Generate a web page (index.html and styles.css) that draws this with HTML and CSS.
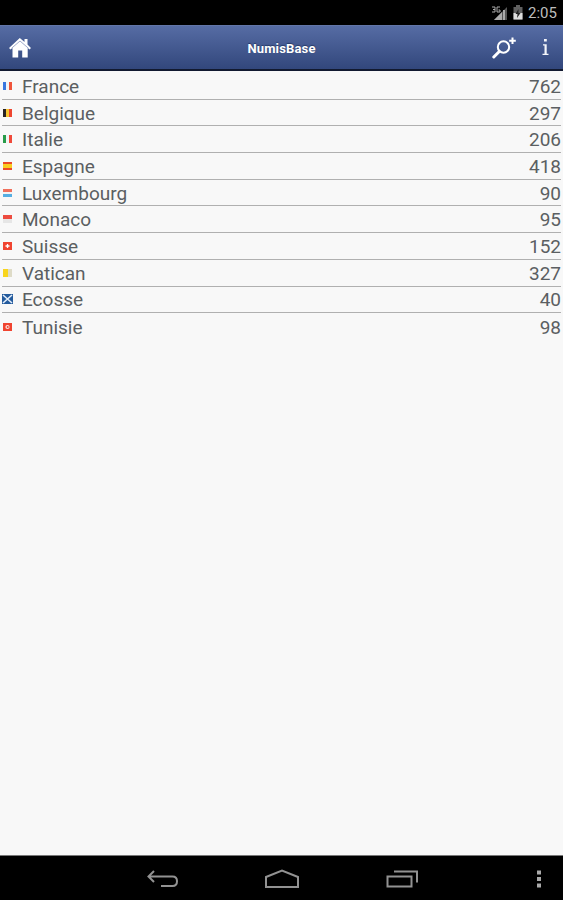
FILE: index.html
```html
<!DOCTYPE html>
<html lang="fr">
  <head>
    <meta charset="UTF-8" />
    <meta name="viewport" content="width=device-width, initial-scale=1.0" />
    <title>NumisBase</title>
    <link rel="stylesheet" href="styles.css">
  </head>
  <body>
    <div class="status-bar">
      <svg class="signal" width="17" height="16" viewBox="0 0 17 16">
        <path d="M16 2V15H3Z" fill="#555" />
        <path d="M11 7V15H3ZM12 5h2v10h-2z" fill="#aaa" />
        <path d="M1 2h3v5H1M2 4.500h2M9 2H6v5h3V5H7.500" fill="none" stroke="#aaa" />
      </svg>
      <svg class="battery" width="10" height="15" viewBox="0 0 10 15">
        <path d="M3 0h4v2h2.500v12.500h-9V2H3z" fill="#606060" />
        <path d="M.5 8h9v6.500h-9z" fill="#ddd" />
        <path d="M5.500 4L2.500 9h2L4 13l3.500-5h-2z" fill="#222" />
      </svg>
      <span class="clock">2:05</span>
    </div>

    <header class="header">
      <svg class="home" width="22" height="20" viewBox="0 0 22 20">
        <path d="M10.800 0L0 10l1.500 1.500L3.500 10v9.500h5.700v-7h4v7h5.500V10l1.800 1.500L22 10l-3.500-3.400V1h-3v3z" fill="#fff" />
        <path d="M2.500 10.300L11 3l8.500 7.300" fill="none" stroke="#8796bd" stroke-width=".8" />
      </svg>
      <h1>NumisBase</h1>
      <div class="actions">
        <svg class="search" width="25" height="22" viewBox="0 0 25 22">
          <circle cx="11.500" cy="10" r="5.700" fill="none" stroke="#fff" stroke-width="2" />
          <path d="M7.300 14.500L1.800 20" stroke="#fff" stroke-width="3" stroke-linecap="round" />
          <path d="M20.500 .5v6.500M17.200 3.700h6.600" stroke="#fff" stroke-width="2" />
        </svg>
        <svg class="info" width="7" height="17" viewBox="0 0 7 17">
          <path d="M2 0h2.800v2.600H2zM1 5.200h3.700v9.500H6.500V16H.5v-1.300h2V6.500H1z" fill="#f4f6fb" />
        </svg>
      </div>
    </header>

    <ul class="countries">
      <li><i class="flag france"></i><span>France</span><b>762</b></li>
      <li><i class="flag belgique"></i><span>Belgique</span><b>297</b></li>
      <li><i class="flag italie"></i><span>Italie</span><b>206</b></li>
      <li><i class="flag espagne"></i><span>Espagne</span><b>418</b></li>
      <li><i class="flag luxembourg"></i><span>Luxembourg</span><b>90</b></li>
      <li><i class="flag monaco"></i><span>Monaco</span><b>95</b></li>
      <li><svg class="flag" viewBox="0 0 9 8"><path d="M0 0h9v8H0z" fill="#f04430" /><path d="M4.500 2v4M2.500 4h4" stroke="#fff" stroke-width="1.300" /></svg><span>Suisse</span><b>152</b></li>
      <li><i class="flag vatican"></i><span>Vatican</span><b>327</b></li>
      <li><svg class="flag ecosse" viewBox="0 0 11 10"><path d="M0 0h11v10H0z" fill="#245b9d" /><path d="M1 1l9 8M10 1L1 9" stroke="#e4eefa" stroke-width="1.600" /></svg><span>Ecosse</span><b>40</b></li>
      <li><svg class="flag" viewBox="0 0 9 8"><path d="M0 0h9v8H0z" fill="#f04430" /><circle cx="4.500" cy="4" r="2.100" fill="#fbe3df" /><circle cx="4.700" cy="4" r="1" fill="#f04430" /></svg><span>Tunisie</span><b>98</b></li>
    </ul>

    <nav class="nav-bar">
      <svg class="back" width="32" height="18" viewBox="0 0 32 18">
        <path d="M7 1L1.500 6.500L7 12M2 6.500h23.500q4.500 0 4.500 4.700t-4.500 4.800H14" />
      </svg>
      <svg class="home-key" width="36" height="20" viewBox="0 0 36 20">
        <path d="M2 18V8L18 1.500L34 8v10z" />
      </svg>
      <svg class="recent" width="33" height="18" viewBox="0 0 33 18">
        <path d="M1.500 6.500h24v10h-24zM8 1.500h23v11" />
      </svg>
      <svg class="more" width="6" height="18" viewBox="0 0 6 18">
        <path d="M1 .5h4v4H1zM1 7h4v4H1zM1 13.500h4v4H1z" />
      </svg>
    </nav>
  </body>
</html>
```
FILE: styles.css
```css
* {
  box-sizing: border-box;
}

body {
  margin: 0;
  height: 900px;
  display: flex;
  flex-direction: column;
  font-family: Roboto, sans-serif;
  background-color: #f8f8f8;
  overflow: hidden;
}

.status-bar {
  height: 25px;
  display: flex;
  align-items: center;
  justify-content: flex-end;
  padding-right: 5px;
  background-color: #000;
}

.signal {
  margin-right: 5px;
}

.battery {
  margin-right: 5px;
}

.clock {
  width: 30px;
  padding-top: 2px;
  font-size: 15px;
  line-height: 23px;
  color: #bdbdbd;
}

.header {
  height: 46px;
  display: grid;
  grid-template-columns: 80px 1fr 80px;
  align-items: center;
  border-top: 1px solid #6276a8;
  border-bottom: 2px solid #121a30;
  background: linear-gradient(#566ca4, #32477c);
}

.header h1 {
  margin: 0;
  padding-top: 1px;
  text-align: center;
  font-size: 13px;
  font-weight: 700;
  letter-spacing: 0.150px;
  color: #fff;
  text-shadow: 0 -1px 1px #263a68;
}

.home {
  margin-left: 9px;
}

.actions {
  display: flex;
  align-items: center;
  justify-content: flex-end;
  gap: 25px;
  padding-right: 14px;
}

.countries {
  flex: 1;
  margin: 0;
  padding: 2px 2px 0;
  list-style: none;
}

.countries li {
  display: flex;
  align-items: center;
  height: 26.700px;
  border-bottom: 1px solid #b0b0b0;
  font-size: 19px;
  color: #5b5f62;
}

.countries li:last-child {
  border-bottom: none;
}

.countries span {
  flex: 1;
  padding-top: 1px;
}

.countries b {
  padding-top: 1px;
  font-weight: 400;
}

.flag {
  width: 9px;
  height: 8px;
  margin: 0 10px 0 1px;
}

.france {
  background: linear-gradient(90deg, #3976df 33%, #f4f4f4 33% 66%, #f0553b 66%);
}

.belgique {
  background: linear-gradient(90deg, #282323 33%, #f6c431 33% 66%, #ee4630 66%);
}

.italie {
  background: linear-gradient(90deg, #279b49 33%, #f4f4f4 33% 66%, #f04a3a 66%);
}

.espagne {
  background: linear-gradient(#ec4b27 25%, #f9cd22 25% 72%, #ec4b27 72%);
}

.luxembourg {
  background: linear-gradient(#f0705c 33%, #f3f3f3 33% 62%, #55aee2 62%);
}

.monaco {
  background: linear-gradient(#ed4c40 50%, #e6e6e6 50%);
}

.vatican {
  background: linear-gradient(90deg, #f8d51e 55%, #dedbc7 55%);
}

.ecosse {
  width: 11px;
  height: 10px;
  margin: 0 9px 0 0;
}

.nav-bar {
  height: 45px;
  display: flex;
  align-items: center;
  padding: 2px 21px 0 147px;
  border-top: 1px solid #777;
  background-color: #000;
}

.nav-bar path {
  fill: none;
  stroke: #929292;
  stroke-width: 2;
}

.home-key {
  margin-left: 85px;
}

.recent {
  margin-left: 86px;
}

.more {
  margin-left: auto;
}

.nav-bar .more path {
  fill: #aaa;
  stroke: none;
}
```
